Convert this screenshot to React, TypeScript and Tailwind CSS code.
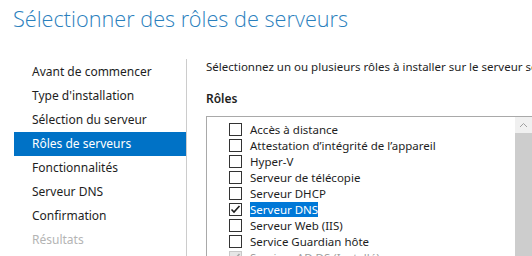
import React from "react";

const font = { fontFamily: '"Segoe UI", "Noto Sans", "Open Sans", sans-serif' };
const titleFont = { fontFamily: '"Segoe UI Light", "Noto Sans Light", "Open Sans Light", "Open Sans", "Noto Sans", sans-serif' };

const steps = [
  { label: "Avant de commencer" },
  { label: "Type d'installation" },
  { label: "Sélection du serveur" },
  { label: "Rôles de serveurs", active: true },
  { label: "Fonctionnalités" },
  { label: "Serveur DNS" },
  { label: "Confirmation" },
  { label: "Résultats", disabled: true },
];

const roles = [
  { label: "Accès à distance" },
  { label: "Attestation d’intégrité de l’appareil" },
  { label: "Hyper-V" },
  { label: "Serveur de télécopie" },
  { label: "Serveur DHCP" },
  { label: "Serveur DNS", checked: true, selected: true },
  { label: "Serveur Web (IIS)" },
  { label: "Service Guardian hôte" },
  { label: "Services AD DS (Installé)", checked: true, disabled: true },
];

function Check({ color }: { color: string }) {
  return (
    <svg width="11" height="11" viewBox="0 0 11 11" className="block">
      <path d="M1.5 5.5 L4 8 L9.5 2" fill="none" stroke={color} strokeWidth="1.6" />
    </svg>
  );
}

export default function App() {
  return (
    <div className="w-[532px] h-[256px] overflow-hidden bg-white relative" style={font}>
      <div className="h-[59px] pl-[13px] pt-[3px]">
        <div
          className="text-[21.7px] leading-[32px] font-light text-[#2a80bd] whitespace-nowrap"
          style={titleFont}
        >
          Sélectionner des rôles de serveurs
        </div>
      </div>
      <div className="flex h-[197px]">
        <div className="w-[187px] shrink-0 border-r border-[#cccccc] pl-[14px] pt-[1px]">
          {steps.map((s) => (
            <div
              key={s.label}
              className={
                "h-[24px] leading-[24px] pl-[18px] text-[12px] whitespace-nowrap " +
                (s.active
                  ? "bg-[#0072c6] text-white"
                  : s.disabled
                  ? "text-[#b4b4b4]"
                  : "text-[#1e1e1e]")
              }
            >
              {s.label}
            </div>
          ))}
        </div>
        <div className="flex-1 min-w-0 pl-[19px]">
          <div className="text-[11.5px] leading-[16px] text-[#1e1e1e] whitespace-nowrap">
            Sélectionnez un ou plusieurs rôles à installer sur le serveur sélectionné.
          </div>
          <div className="mt-[16px] text-[12px] leading-[16px] font-semibold text-[#1e1e1e]">
            Rôles
          </div>
          <div className="mt-[9px] w-[327px] h-[150px] border border-[#a9a9a9] flex">
            <div className="flex-1 pt-[4px] pl-[22px]">
              {roles.map((r) => (
                <div key={r.label} className="h-[16px] flex items-center">
                  <div
                    className={
                      "w-[13px] h-[13px] border flex items-center justify-center shrink-0 " +
                      (r.disabled ? "border-[#c8c8c8] bg-[#e6e6e6]" : "border-[#333333] bg-white")
                    }
                  >
                    {r.checked && <Check color={r.disabled ? "#a8a8a8" : "#1e1e1e"} />}
                  </div>
                  <div
                    className={
                      "ml-[8px] text-[11.5px] leading-[15px] whitespace-nowrap " +
                      (r.selected
                        ? "bg-[#0078d7] text-white"
                        : r.disabled
                        ? "text-[#a0a0a0]"
                        : "text-[#1e1e1e]")
                    }
                  >
                    {r.label}
                  </div>
                </div>
              ))}
            </div>
            <div className="w-[17px] shrink-0 flex flex-col">
              <div className="h-[16px] bg-[#f0f0f0] flex items-center justify-center">
                <svg width="9" height="6" viewBox="0 0 9 6">
                  <path d="M1 5 L4.5 1.5 L8 5" fill="none" stroke="#a0a0a0" strokeWidth="1" />
                </svg>
              </div>
              <div className="flex-1 bg-[#cdcdcd]" />
            </div>
          </div>
        </div>
      </div>
    </div>
  );
}
